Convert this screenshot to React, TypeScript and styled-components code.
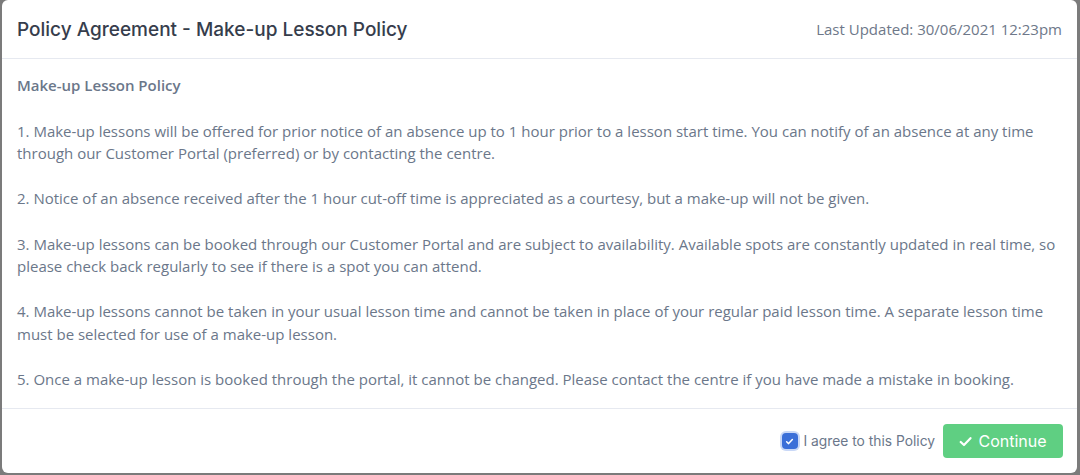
import styled, { createGlobalStyle } from "styled-components";

const GlobalStyle = createGlobalStyle`
  html, body {
    margin: 0;
    padding: 0;
    background: #7b7b7b;
    overflow: hidden;
  }
  * { box-sizing: border-box; }
`;

const policyText = `Make-up Lesson Policy`;

const paragraphs = [
  "1. Make-up lessons will be offered for prior notice of an absence up to 1 hour prior to a lesson start time. You can notify of an absence at any time through our Customer Portal (preferred) or by contacting the centre.",
  "2. Notice of an absence received after the 1 hour cut-off time is appreciated as a courtesy, but a make-up will not be given.",
  "3. Make-up lessons can be booked through our Customer Portal and are subject to availability. Available spots are constantly updated in real time, so please check back regularly to see if there is a spot you can attend.",
  "4. Make-up lessons cannot be taken in your usual lesson time and cannot be taken in place of your regular paid lesson time. A separate lesson time must be selected for use of a make-up lesson.",
  "5. Once a make-up lesson is booked through the portal, it cannot be changed. Please contact the centre if you have made a mistake in booking.",
];

export default function App() {
  return (
    <>
      <GlobalStyle />
      <Modal>
        <Header>
          <Title>Policy Agreement - Make-up Lesson Policy</Title>
          <Updated>Last Updated: 30/06/2021 12:23pm</Updated>
        </Header>
        <Body>
          <Heading>{policyText}</Heading>
          {paragraphs.map((p) => (
            <Paragraph key={p}>{p}</Paragraph>
          ))}
        </Body>
        <Footer>
          <Agree>
            <Check>
              <svg width="9" height="9" viewBox="0 0 12 12">
                <path d="M2.2 6.3 L4.8 8.8 L9.8 3.4" fill="none" stroke="#fff" strokeWidth="2" strokeLinecap="round" strokeLinejoin="round" />
              </svg>
            </Check>
            I agree to this Policy
          </Agree>
          <ContinueButton>
            <svg width="13" height="13" viewBox="0 0 12 12">
              <path d="M1.6 6.4 L4.6 9.3 L10.6 2.9" fill="none" stroke="#fff" strokeWidth="2" strokeLinecap="round" strokeLinejoin="round" />
            </svg>
            Continue
          </ContinueButton>
        </Footer>
      </Modal>
    </>
  );
}

const Modal = styled.div`
  margin: 0 3px 0 2px;
  height: 473px;
  background: #ffffff;
  border-radius: 6px;
  display: flex;
  flex-direction: column;
  overflow: hidden;
`;

const Header = styled.div`
  flex-shrink: 0;
  height: 59px;
  padding: 0 15px 0 15px;
  display: flex;
  align-items: center;
  justify-content: space-between;
  border-bottom: 1px solid #e6e9f0;
`;

const Title = styled.h1`
  margin: 0;
  font-family: "Inter", "Noto Sans", sans-serif;
  font-size: 19px;
  font-weight: 500;
  color: #363d4c;
  letter-spacing: 0;
`;

const Updated = styled.span`
  font-family: "Open Sans", sans-serif;
  font-size: 15px;
  color: #6e7889;
`;

const Body = styled.div`
  flex: 1;
  min-height: 0;
  overflow: hidden;
  padding: 15px 15px 0 15px;
  border-bottom: 1px solid #e6e9f0;
  font-family: "Open Sans", sans-serif;
  font-size: 15px;
  line-height: 22.6px;
  color: #6b778a;
`;

const Heading = styled.div`
  font-weight: 600;
  margin-bottom: 23px;
`;

const Paragraph = styled.p`
  margin: 0 0 22.6px;

  &:last-child {
    margin-bottom: 0;
  }
`;

const Footer = styled.div`
  flex-shrink: 0;
  height: 64px;
  padding: 0 14px 0 0;
  display: flex;
  align-items: center;
  justify-content: flex-end;
  gap: 8px;
`;

const Agree = styled.label`
  display: flex;
  align-items: center;
  gap: 6px;
  font-family: "Inter", "Noto Sans", sans-serif;
  font-size: 13.8px;
  color: #6b778a;
`;

const Check = styled.span`
  width: 16px;
  height: 16px;
  border-radius: 4px;
  background: #3b6fd8;
  box-shadow: 0 0 0 2px #c9d8f7;
  display: flex;
  align-items: center;
  justify-content: center;
`;

const ContinueButton = styled.button`
  width: 120px;
  height: 34px;
  border: none;
  border-radius: 4px;
  background: #5fcf82;
  color: #ffffff;
  font-family: "Inter", "Noto Sans", sans-serif;
  font-size: 16px;
  display: flex;
  align-items: center;
  justify-content: center;
  gap: 6px;
`;
